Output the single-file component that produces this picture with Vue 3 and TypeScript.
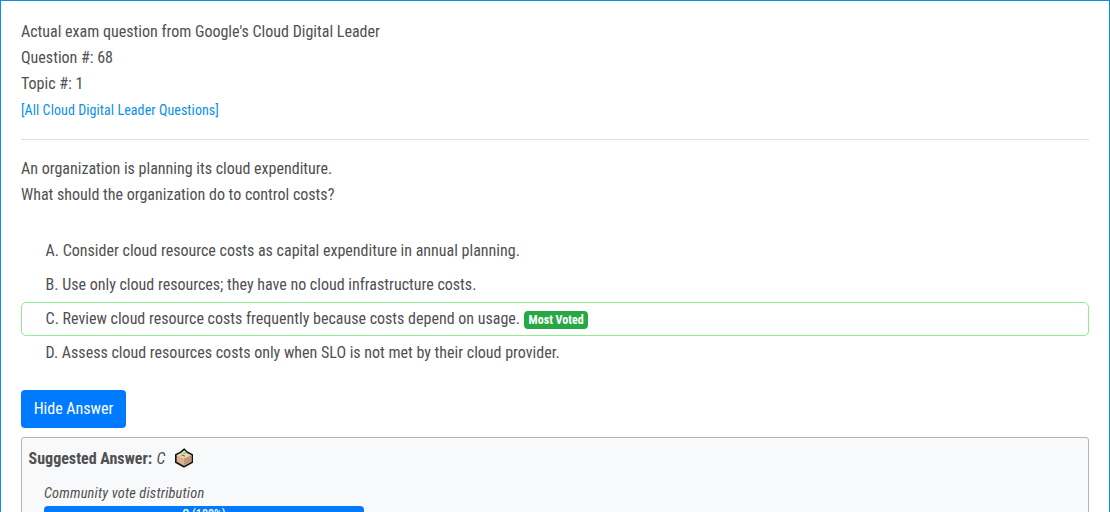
<script setup lang="ts">
interface Choice {
  letter: string
  text: string
  mostVoted?: boolean
}

const choices: Choice[] = [
  { letter: 'A', text: 'Consider cloud resource costs as capital expenditure in annual planning.' },
  { letter: 'B', text: 'Use only cloud resources; they have no cloud infrastructure costs.' },
  { letter: 'C', text: 'Review cloud resource costs frequently because costs depend on usage.', mostVoted: true },
  { letter: 'D', text: 'Assess cloud resources costs only when SLO is not met by their cloud provider.' },
]
</script>

<template>
  <main class="discussion">
    <header class="question-header">
      <div>Actual exam question from Google's Cloud Digital Leader</div>
      <div>Question #: 68</div>
      <div>Topic #: 1</div>
      <a class="all-link">[All Cloud Digital Leader Questions]</a>
    </header>

    <p class="question">
      An organization is planning its cloud expenditure.<br />
      What should the organization do to control costs?
    </p>

    <ul class="choices">
      <li v-for="c in choices" :key="c.letter" :class="{ voted: c.mostVoted }">
        <span>{{ c.letter }}. {{ c.text }}</span>
        <span v-if="c.mostVoted" class="badge">Most Voted</span>
      </li>
    </ul>

    <button class="toggle" type="button">Hide Answer</button>

    <section class="answer">
      <div class="suggested">
        <strong>Suggested Answer:</strong>
        <em>C</em>
        <svg class="ballot" viewBox="0 0 20 20" aria-hidden="true">
          <path d="M1.8 6.8 6.5 4.4 10.3 1.2 13.2 4.3 18.2 6.8V14.2L10 18.8 1.8 14.2Z" fill="#d9b294" stroke="#111" stroke-width="1.6" stroke-linejoin="round" />
          <path d="M2.5 7.2 10 4 17.5 7.2 10 10.7Z" fill="#ecd0ba" />
          <path d="M10 10.7 17.5 7.2V13.8L10 18Z" fill="#c09673" />
          <path d="M6.5 6.2 10.2 2.2 13 5.2 10.6 7.6Z" fill="#e4f5cf" />
          <path d="m9 4.8 1.2 1 1.8-1.8" fill="none" stroke="#62d832" stroke-width="1.4" />
          <path d="m7.4 6.8 3.6 1.4" stroke="#5d4737" stroke-width="0.9" />
        </svg>
      </div>
      <div class="vote-title">Community vote distribution</div>
      <div class="progress"><div class="bar">C (100%)</div></div>
    </section>
  </main>
</template>

<style>
html,
body {
  height: 100%;
  overflow: hidden;
  background: #fff;
}
</style>

<style scoped>
.discussion {
  box-sizing: border-box;
  width: 1110px;
  height: 512px;
  overflow: hidden;
  padding: 18px 20px 0;
  border: 1px solid #0a8fe4;
  border-bottom: 0;
  color: #505050;
  font-family: "Roboto Condensed", Roboto, sans-serif;
  font-stretch: 75%;
  font-size: 16px;
  line-height: 26px;
}
.question-header {
  height: 120px;
  border-bottom: 1px solid #dfdfdf;
}
.all-link {
  display: block;
  color: #0a90ea;
  font-size: 14px;
  letter-spacing: 0.08px;
}
.question {
  margin: 16px 0 26px;
}
.choices {
  margin: 0;
  padding: 0;
  list-style: none;
}
.choices li {
  box-sizing: border-box;
  display: flex;
  align-items: center;
  gap: 4px;
  height: 34px;
  padding-left: 23.6px;
  border: 1px solid transparent;
  border-radius: 5px;
}
.choices li.voted {
  border-color: #90ee90;
}
.badge {
  margin-top: 2px;
  padding: 3px 4.6px;
  border-radius: 4px;
  background: #28a745;
  color: #fff;
  font-size: 12px;
  font-weight: 700;
  line-height: 12px;
}
.toggle {
  display: block;
  width: 105px;
  height: 38px;
  margin: 20px 0 9px;
  padding: 0;
  border: 0;
  border-radius: 4px;
  background: #007bff;
  color: #fff;
  font: inherit;
}
.answer {
  box-sizing: border-box;
  height: 120px;
  padding: 8px 6.6px;
  border: 1px solid #b2b4b6;
  border-radius: 3px;
  background: #f8f9fa;
}
.suggested {
  display: flex;
  align-items: center;
  gap: 4.4px;
}
.ballot {
  width: 20px;
  height: 20px;
  margin: 0 0 2px 4px;
}
.vote-title {
  margin: 9px 0 -1px 15.4px;
  font-size: 14.4px;
  font-style: italic;
  letter-spacing: 0.18px;
}
.progress {
  width: 320px;
  height: 16px;
  margin-left: 15.4px;
  overflow: hidden;
  border-radius: 4px;
}
.bar {
  height: 16px;
  background: #007bff;
  color: #fff;
  font-size: 12px;
  font-weight: 500;
  line-height: 16px;
  letter-spacing: 0.08px;
  text-align: center;
}
</style>
